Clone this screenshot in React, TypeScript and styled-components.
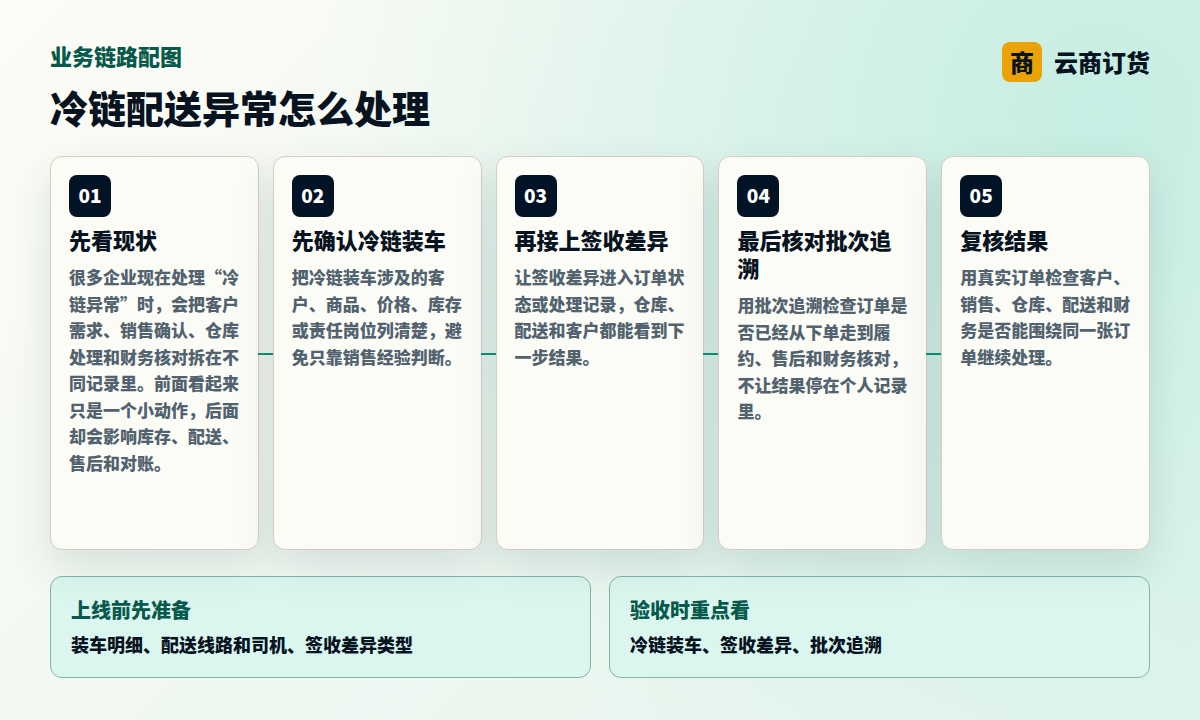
import React from "react"
import styled, { createGlobalStyle } from "styled-components"

const steps = [
  {
    no: "01",
    title: "先看现状",
    text: "很多企业现在处理“冷链异常”时，会把客户需求、销售确认、仓库处理和财务核对拆在不同记录里。前面看起来只是一个小动作，后面却会影响库存、配送、售后和对账。",
  },
  {
    no: "02",
    title: "先确认冷链装车",
    text: "把冷链装车涉及的客户、商品、价格、库存或责任岗位列清楚，避免只靠销售经验判断。",
  },
  {
    no: "03",
    title: "再接上签收差异",
    text: "让签收差异进入订单状态或处理记录，仓库、配送和客户都能看到下一步结果。",
  },
  {
    no: "04",
    title: "最后核对批次追溯",
    text: "用批次追溯检查订单是否已经从下单走到履约、售后和财务核对，不让结果停在个人记录里。",
  },
  {
    no: "05",
    title: "复核结果",
    text: "用真实订单检查客户、销售、仓库、配送和财务是否能围绕同一张订单继续处理。",
  },
]

const notes = [
  { title: "上线前先准备", text: "装车明细、配送线路和司机、签收差异类型" },
  { title: "验收时重点看", text: "冷链装车、签收差异、批次追溯" },
]

const App: React.FC = () => {
  return (
    <Page lang="zh-CN">
      <GlobalStyle />
      <Header>
        <div>
          <Eyebrow>业务链路配图</Eyebrow>
          <Heading>冷链配送异常怎么处理</Heading>
        </div>
        <Brand>
          <BrandMark>商</BrandMark>
          <BrandName>云商订货</BrandName>
        </Brand>
      </Header>
      <Steps>
        {steps.map((step, i) => (
          <Card key={step.no}>
            <Badge>{step.no}</Badge>
            <CardTitle>{step.title}</CardTitle>
            <CardText>{step.text}</CardText>
            {i < steps.length - 1 && <Connector />}
          </Card>
        ))}
      </Steps>
      <Notes>
        {notes.map((note) => (
          <Note key={note.title}>
            <NoteTitle>{note.title}</NoteTitle>
            <NoteText>{note.text}</NoteText>
          </Note>
        ))}
      </Notes>
    </Page>
  )
}

const GlobalStyle = createGlobalStyle`
  html, body {
    margin: 0;
    padding: 0;
  }
  body {
    font-family: "Noto Sans CJK SC", "Noto Sans", sans-serif;
  }
`

const Page = styled.div`
  box-sizing: border-box;
  width: 1200px;
  height: 720px;
  overflow: hidden;
  padding: 42px 50px;
  display: flex;
  flex-direction: column;
  background:
    radial-gradient(circle at 92% 16%, #c6eee3 0%, rgba(198, 238, 227, 0) 62%),
    linear-gradient(135deg, #fdfcf6 0%, #eef7f1 55%, #e4f5ee 100%);
  color: #07131f;
`

const Header = styled.div`
  height: 114px;
  display: flex;
  justify-content: space-between;
  align-items: flex-start;
`

const Eyebrow = styled.div`
  margin-top: -3px;
  font-size: 22px;
  font-weight: 800;
  line-height: 32px;
  color: #07594c;
`

const Heading = styled.h1`
  margin: 12px 0 0;
  font-size: 38px;
  font-weight: 800;
  line-height: 48px;
  color: #07131f;
`

const Brand = styled.div`
  display: flex;
  align-items: center;
  gap: 12px;
`

const BrandMark = styled.div`
  width: 40px;
  height: 40px;
  padding-bottom: 2px;
  box-sizing: border-box;
  border-radius: 8px;
  background: #eaa204;
  display: flex;
  align-items: center;
  justify-content: center;
  font-size: 24px;
  font-weight: 800;
  color: #07131f;
`

const BrandName = styled.div`
  margin-top: -2px;
  font-size: 24px;
  font-weight: 800;
  color: #07131f;
`

const Steps = styled.div`
  display: grid;
  grid-template-columns: repeat(5, 1fr);
  gap: 14px;
  height: 394px;
`

const Card = styled.div`
  position: relative;
  box-sizing: border-box;
  padding: 18px;
  border: 1px solid #d4cdc0;
  border-radius: 12px;
  background: #fcfcf7;
  box-shadow: 0 16px 40px rgba(10, 50, 50, 0.12);
`

const Badge = styled.div`
  box-sizing: border-box;
  width: 42px;
  height: 42px;
  padding-bottom: 4px;
  border-radius: 8px;
  background: #021326;
  color: #ffffff;
  display: flex;
  align-items: center;
  justify-content: center;
  font-size: 19px;
  font-weight: 800;
`

const CardTitle = styled.div`
  margin-top: 8px;
  font-size: 22px;
  font-weight: 800;
  line-height: 28px;
  color: #07131f;
`

const CardText = styled.div`
  margin-top: 11px;
  font-size: 17px;
  font-weight: 800;
  line-height: 26.5px;
  color: #52636f;
`

const Connector = styled.div`
  position: absolute;
  top: 196px;
  right: -15px;
  width: 15px;
  height: 2px;
  background: #0a8f7a;
`

const Notes = styled.div`
  margin-top: 26px;
  display: grid;
  grid-template-columns: 1fr 1fr;
  gap: 18px;
`

const Note = styled.div`
  box-sizing: border-box;
  height: 102px;
  padding: 19px 20px;
  border: 1px solid #84b5a8;
  border-radius: 12px;
  background: #daf6ef;
`

const NoteTitle = styled.div`
  font-size: 20px;
  font-weight: 800;
  line-height: 28px;
  color: #07594c;
`

const NoteText = styled.div`
  margin-top: 7px;
  font-size: 18px;
  font-weight: 800;
  line-height: 26px;
  color: #07131f;
`

export default App
